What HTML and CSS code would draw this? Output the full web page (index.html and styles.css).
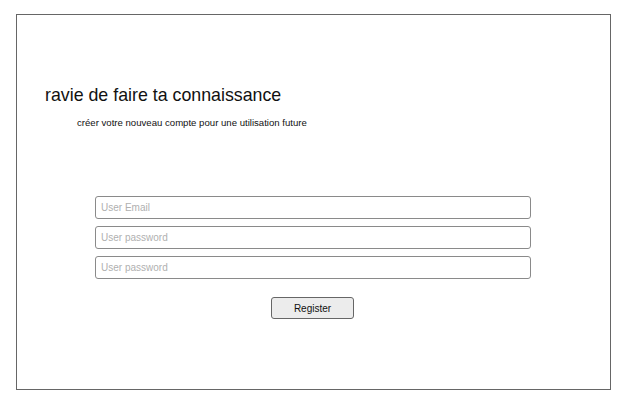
FILE: index.html
```html
<!DOCTYPE html>
<html>
<head>
<meta charset="utf-8">
<link rel="stylesheet" href="styles.css">
</head>
<body>
<div class="frame">
  <h1 class="title">ravie de faire ta connaissance</h1>
  <p class="subtitle">créer votre nouveau compte pour une utilisation future</p>
  <form class="form">
    <input class="field" type="email" placeholder="User Email">
    <input class="field" type="password" placeholder="User password">
    <input class="field" type="password" placeholder="User password">
    <div class="actions">
      <button class="btn" type="button">Register</button>
    </div>
  </form>
</div>
</body>
</html>
```
FILE: styles.css
```css
html, body {
  margin: 0;
  padding: 0;
  background: #fff;
}
body {
  font-family: "Liberation Sans", Arial, sans-serif;
  color: #111;
}
.frame {
  box-sizing: border-box;
  margin: 14px 0 0 16px;
  width: 595px;
  height: 376px;
  border: 1px solid #666;
  padding: 68px 0 0 28px;
}
.title {
  margin: 0;
  font-size: 17.8px;
  font-weight: normal;
  line-height: 24px;
  color: #111;
}
.subtitle {
  margin: 10px 0 0 32px;
  font-size: 9.6px;
  line-height: 12px;
  color: #111;
}
.form {
  margin: 67px 0 0 50px;
  width: 436px;
  display: flex;
  flex-direction: column;
  gap: 7px;
}
.field {
  box-sizing: border-box;
  width: 436px;
  height: 23px;
  margin: 0;
  border: 1px solid #8a8a8a;
  border-radius: 3px;
  padding: 0 5px;
  font-family: "Liberation Sans", Arial, sans-serif;
  font-size: 10px;
  outline: none;
}
.field::placeholder {
  color: #b0b0b0;
}
.actions {
  display: flex;
  justify-content: center;
  margin-top: 11px;
}
.btn {
  box-sizing: border-box;
  width: 83px;
  height: 22px;
  margin: 0 0 0 -1px;
  border: 1px solid #666;
  border-radius: 3px;
  background: #ececec;
  font-family: "Liberation Sans", Arial, sans-serif;
  font-size: 10px;
  color: #111;
  padding: 0;
}
```
